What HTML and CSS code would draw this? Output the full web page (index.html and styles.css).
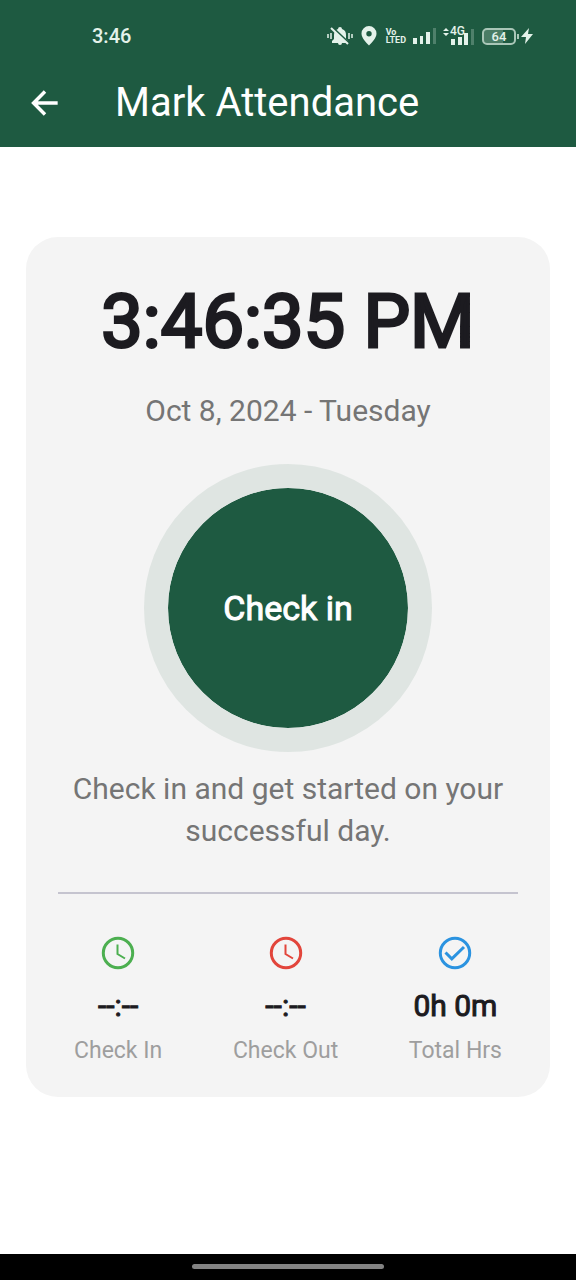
FILE: index.html
```html
<!DOCTYPE html>
<html lang="en">
<head>
<meta charset="utf-8">
<meta name="viewport" content="width=device-width, initial-scale=1">
<title>Mark Attendance</title>
<link rel="stylesheet" href="styles.css">
</head>
<body>
<div class="screen">
  <header class="header">
    <div class="status-bar">
      <time class="status-time">3:46</time>
      <div class="status-icons">
        <svg class="status-mute" width="28" height="20" viewBox="0 0 28 20" aria-hidden="true">
          <path fill="currentColor" d="M14 1a2 2 0 0 1 2 2c3 1 4 3 4 6v4l2 2v2H6v-2l2-2V9c0-3 1-5 4-6a2 2 0 0 1 2-2zm-2 16h4a2 2 0 0 1-4 0z"/>
          <path d="M6 1l17 16" stroke="#1e5a41" stroke-width="2"/>
          <path d="M5 2l17 16" stroke="currentColor" stroke-width="2"/>
          <path d="M2 8v4M5 7v6M23 7v6M26 8v4" stroke="currentColor" stroke-width="1.5"/>
        </svg>
        <svg class="status-pin" width="16" height="20" viewBox="0 0 16 20" aria-hidden="true">
          <path fill="currentColor" fill-rule="evenodd" d="M8 0a7.500 7.500 0 0 1 7.500 7.500c0 4.500-4.500 9-7.500 12C5 16.500.5 12 .5 7.500A7.500 7.500 0 0 1 8 0zm0 5a2.700 2.700 0 1 0 0 5.400A2.700 2.700 0 0 0 8 5z"/>
        </svg>
        <span class="volte"><span>Vo</span><span>LTED</span></span>
        <svg class="status-signal" width="24" height="16" viewBox="0 0 24 16" aria-hidden="true">
          <path fill="currentColor" d="M0 10h4v6H0zM7 8h3v8H7zM13 4h4v12h-4z"/>
          <path fill="currentColor" opacity=".25" d="M20 0h3v16h-3z"/>
        </svg>
        <span class="mobile-data">
          <svg width="32" height="18" viewBox="0 0 32 18" aria-hidden="true">
            <path fill="currentColor" d="M0 4l3-3 3 3zM0 6h6L3 9zM8 12h4v6H8zM15 10h4v8h-4zM21 6h4v12h-4z"/>
            <path fill="currentColor" opacity=".25" d="M28 2h3v16h-3z"/>
          </svg>
          <span class="network">4G</span>
        </span>
        <span class="battery">64</span>
        <svg class="status-bolt" width="12" height="18" viewBox="0 0 12 18" aria-hidden="true">
          <path fill="currentColor" d="M8 1L0 10h5l-1 7 8-10H7z"/>
        </svg>
      </div>
    </div>
    <div class="app-bar">
      <button class="back" type="button" aria-label="Back">
        <svg width="38" height="38" viewBox="0 0 24 24" aria-hidden="true">
          <path d="M20 12H5.500M12 4.800L4.800 12l7.200 7.200" fill="none" stroke="currentColor" stroke-width="2.200"/>
        </svg>
      </button>
      <h1 class="title">Mark Attendance</h1>
    </div>
  </header>

  <main class="content">
    <section class="card">
      <time class="clock">3:46:35 PM</time>
      <p class="date">Oct 8, 2024 - Tuesday</p>
      <button class="check-in" type="button">Check in</button>
      <p class="hint">Check in and get started on your successful day.</p>
      <hr class="divider">
      <div class="stats">
        <div class="stat">
          <svg class="stat-icon green" viewBox="0 0 34 34" aria-hidden="true">
            <circle cx="17" cy="17" r="14.7"/><path class="hand" d="M16.500 8.500v9.500l7.500 4.500"/>
          </svg>
          <strong class="value">--:--</strong>
          <span class="label">Check In</span>
        </div>
        <div class="stat">
          <svg class="stat-icon red" viewBox="0 0 34 34" aria-hidden="true">
            <circle cx="17" cy="17" r="14.7"/><path class="hand" d="M16.500 8.500v9.500l7.500 4.500"/>
          </svg>
          <strong class="value">--:--</strong>
          <span class="label">Check Out</span>
        </div>
        <div class="stat">
          <svg class="stat-icon blue" viewBox="0 0 34 34" aria-hidden="true">
            <circle cx="17" cy="17" r="14.7"/><path d="M7.500 16.500l6.300 6.300L26 11"/>
          </svg>
          <strong class="value">0h 0m</strong>
          <span class="label">Total Hrs</span>
        </div>
      </div>
    </section>
  </main>

  <footer class="nav-bar"><span class="nav-handle"></span></footer>
</div>
</body>
</html>
```
FILE: styles.css
```css
* {
  box-sizing: border-box;
}

body {
  margin: 0;
  background: #fff;
  font-family: Roboto, "Liberation Sans", sans-serif;
}

button {
  font: inherit;
  border: 0;
  padding: 0;
  cursor: pointer;
}

.screen {
  display: flex;
  flex-direction: column;
  min-height: 100vh;
}

.header {
  background: #1e5a41;
  color: #fff;
}

.status-bar {
  display: flex;
  align-items: center;
  justify-content: space-between;
  padding: 24px 43px 0 92px;
  color: #e4f2ea;
}

.status-time {
  font-size: 20px;
  font-weight: 500;
  line-height: 24px;
}

.status-icons {
  display: flex;
  align-items: center;
}

.status-pin {
  margin-left: 7px;
}

.volte {
  display: flex;
  flex-direction: column;
  margin-left: 9px;
  font-size: 9px;
  font-weight: 700;
  line-height: 8px;
}

.status-signal {
  margin-left: 7px;
}

.mobile-data {
  position: relative;
  display: flex;
  margin-left: 6px;
}

.network {
  position: absolute;
  top: -2px;
  left: 7px;
  font-size: 12px;
  font-weight: 500;
  line-height: 12px;
}

.battery {
  position: relative;
  width: 34px;
  margin-left: 7px;
  border: 2px solid #a9c6b7;
  border-radius: 5px;
  background: linear-gradient(90deg, #4a7c65 64%, #1e5a41 64%);
  font-size: 13px;
  font-weight: 500;
  line-height: 13px;
  text-align: center;
}

.battery::after {
  content: "";
  position: absolute;
  top: 4px;
  right: -5px;
  width: 2px;
  height: 5px;
  background: #a9c6b7;
}

.status-bolt {
  margin-left: 5px;
}

.app-bar {
  display: flex;
  align-items: center;
  gap: 51px;
  height: 99px;
  padding: 10px 26px 0;
}

.back {
  display: flex;
  background: none;
  color: inherit;
}

.title {
  margin: 0;
  font-size: 40px;
  font-weight: 400;
  line-height: 48px;
}

.content {
  flex: 1;
  padding: 90px 26px;
}

.card {
  display: flex;
  flex-direction: column;
  align-items: center;
  padding: 39px 32px 32px;
  border-radius: 32px;
  background: #f4f4f4;
}

.clock {
  color: #1c1b20;
  font-size: 74px;
  font-weight: 400;
  line-height: 92px;
  -webkit-text-stroke: 3px #1c1b20;
}

.date,
.hint {
  margin: 0;
  color: #757575;
  font-size: 30px;
  line-height: 42px;
  text-align: center;
}

.date {
  margin-top: 22px;
}

.check-in {
  width: 288px;
  height: 288px;
  margin: 32px 0 16px;
  border: 24px solid #dfe5e2;
  border-radius: 50%;
  background: #1e5a41;
  background-clip: padding-box;
  color: #fff;
  font-size: 34px;
  -webkit-text-stroke: 1px #fff;
}

.divider {
  width: 100%;
  height: 2px;
  margin: 40px 0 42px;
  border: 0;
  background: #c5c4cf;
}

.stats {
  display: flex;
  justify-content: space-between;
  width: 100%;
  padding: 0 16px;
}

.stat {
  display: flex;
  flex-direction: column;
  align-items: center;
}

.stat-icon {
  width: 34px;
  height: 34px;
  fill: none;
  stroke: currentColor;
  stroke-width: 3;
}

.hand {
  stroke-width: 2;
}

.green {
  color: #4caf50;
}

.red {
  color: #e2453b;
}

.blue {
  color: #2b93e0;
}

.value {
  margin-top: 18px;
  color: #1c1b1f;
  font-size: 30px;
  font-weight: 400;
  line-height: 36px;
  -webkit-text-stroke: 1px #1c1b1f;
}

.label {
  margin-top: 13px;
  color: #9e9e9e;
  font-size: 23px;
  line-height: 28px;
}

.nav-bar {
  display: flex;
  justify-content: center;
  padding: 10px 0 11px;
  background: #000;
}

.nav-handle {
  width: 192px;
  height: 5px;
  border-radius: 3px;
  background: #828282;
}
```
